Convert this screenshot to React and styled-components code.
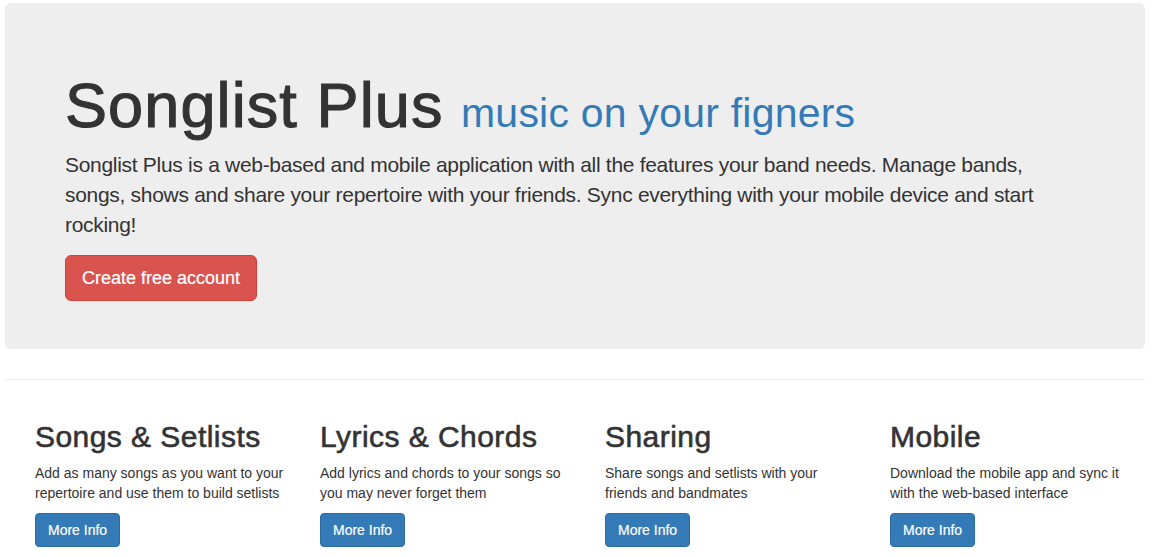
import React from "react";
import styled, { createGlobalStyle } from "styled-components";

const Global = createGlobalStyle`
  * { box-sizing: border-box; }
  html, body { margin: 0; padding: 0; background: #fff; overflow: hidden; }
  body {
    font-family: "Liberation Sans", Arial, Helvetica, sans-serif;
    font-size: 14px;
    line-height: 1.42857143;
    color: #333;
  }
`;

const Page = styled.div`
  width: 1140px;
  margin: 3px 0 0 5px;
`;

const Jumbotron = styled.section`
  background: #eee;
  border-radius: 6px;
  padding: 48px 60px;
  margin-bottom: 30px;
`;

const Title = styled.h1`
  font-size: 63px;
  line-height: 1.1;
  font-weight: 500;
  margin: 20px 0 10px;
  color: #333;
`;

const TitleMain = styled.span`
  letter-spacing: 1.1px;
  -webkit-text-stroke: 1.1px #333;
`;

const Tagline = styled.small`
  font-size: 65%;
  font-weight: 400;
  line-height: 1;
  letter-spacing: 0.25px;
  color: #337ab7;
`;

const Lead = styled.p`
  font-size: 21px;
  line-height: 30px;
  letter-spacing: -0.3px;
  margin: 0 0 15px;
`;

const Button = styled.a`
  display: inline-block;
  color: #fff;
  text-decoration: none;
  cursor: pointer;
  border: 1px solid ${(p) => (p.$variant === "danger" ? "#d43f3a" : "#2e6da4")};
  background: ${(p) => (p.$variant === "danger" ? "#d9534f" : "#337ab7")};
  font-size: ${(p) => (p.$large ? "18px" : "14px")};
  line-height: ${(p) => (p.$large ? "24px" : "20px")};
  padding: ${(p) => (p.$large ? "10px 16px" : "6px 12px")};
  border-radius: ${(p) => (p.$large ? "6px" : "4px")};
  -webkit-text-stroke: 0.2px #fff;
`;

const Rule = styled.hr`
  border: 0;
  border-top: 1px solid #eee;
  margin: 0 0 20px;
`;

const Features = styled.div`
  display: grid;
  grid-template-columns: repeat(4, 285px);
  margin-left: 15px;
`;

const Feature = styled.div`
  padding: 0 15px;
`;

const FeatureTitle = styled.h2`
  font-size: 30px;
  line-height: 33px;
  font-weight: 500;
  letter-spacing: 0.45px;
  -webkit-text-stroke: 0.6px #333;
  margin: 20px 0 10px;
`;

const FeatureText = styled.p`
  margin: 0 0 10px;
`;

const features = [
  {
    title: "Songs & Setlists",
    text: "Add as many songs as you want to your repertoire and use them to build setlists",
  },
  {
    title: "Lyrics & Chords",
    text: "Add lyrics and chords to your songs so you may never forget them",
  },
  {
    title: "Sharing",
    text: "Share songs and setlists with your friends and bandmates",
  },
  {
    title: "Mobile",
    text: "Download the mobile app and sync it with the web-based interface",
  },
];

export default function App() {
  return (
    <>
      <Global />
      <Page>
        <Jumbotron>
          <Title>
            <TitleMain>Songlist Plus</TitleMain> <Tagline>music on your figners</Tagline>
          </Title>
          <Lead>
            Songlist Plus is a web-based and mobile application with all the features your band
            needs. Manage bands, songs, shows and share your repertoire with your friends. Sync
            everything with your mobile device and start rocking!
          </Lead>
          <Button $variant="danger" $large>
            Create free account
          </Button>
        </Jumbotron>
        <Rule />
        <Features>
          {features.map((f) => (
            <Feature key={f.title}>
              <FeatureTitle>{f.title}</FeatureTitle>
              <FeatureText>{f.text}</FeatureText>
              <Button>More Info</Button>
            </Feature>
          ))}
        </Features>
      </Page>
    </>
  );
}
